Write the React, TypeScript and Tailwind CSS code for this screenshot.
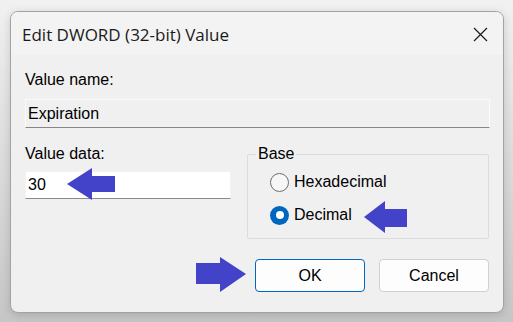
import React from "react";

const ui = { fontFamily: '"Liberation Sans", Arial, sans-serif' };
const title = { fontFamily: '"Open Sans", "Noto Sans", sans-serif' };

function Radio({ checked, label }: { checked?: boolean; label: string }) {
  return (
    <div className="flex items-center h-[20px]">
      {checked ? (
        <span className="w-[19px] h-[19px] rounded-full bg-[#0067c0] flex items-center justify-center">
          <span className="w-[8px] h-[8px] rounded-full bg-white" />
        </span>
      ) : (
        <span className="w-[19px] h-[19px] rounded-full border border-[#6e6e6e] bg-[#f7f7f7]" />
      )}
      <span className="ml-[5px] text-[16px] leading-[20px] text-black">{label}</span>
    </div>
  );
}

export default function App() {
  return (
    <div
      className="relative w-[513px] h-[322px] overflow-hidden bg-linear-to-b from-[#f1f1f1] to-[#c6c6c6] pt-[11px] pl-[10px]"
      style={ui}
    >
      <div className="w-[494px] h-[302px] border border-[#a3a3a3] rounded-[8px] bg-[#f0f0f0] overflow-hidden shadow-[0_2px_8px_rgba(0,0,0,0.15)] flex flex-col">
        {/* title bar */}
        <div className="h-[43px] bg-[#f3f3f3] flex items-center justify-between pl-[11px] pr-[15px] shrink-0">
          <span className="text-[17px] text-[#1a1a1a] pt-[2px]" style={title}>
            Edit DWORD (32-bit) Value
          </span>
          <svg width="15" height="15" viewBox="0 0 15 15" className="mt-[2px]">
            <path d="M1 1L14 14M14 1L1 14" stroke="#1a1a1a" strokeWidth="1.2" />
          </svg>
        </div>

        <div className="flex flex-col pl-[14px] pr-[13px]">
          <div className="mt-[15px] h-[20px] text-[16px] leading-[20px] text-black">Value name:</div>
          <div className="mt-[9px] h-[29px] border border-[#fbfbfb] border-b-[#878787] bg-[#f0f0f0] flex items-center pl-[2px] text-[16px] text-black">
            Expiration
          </div>

          <div className="flex mt-[16px]">
            <div className="w-[206px] flex flex-col">
              <div className="h-[20px] text-[16px] leading-[20px] text-black">Value data:</div>
              <div className="mt-[7px] h-[28px] bg-white border border-[#f2f2f2] border-b-[#8a8a8a] flex items-center pl-[2px] text-[16px] text-black">
                30
              </div>
            </div>
            <fieldset className="ml-[16px] w-[242px] h-[95px] border border-[#dcdcdc] rounded-[2px] pl-[22px]">
              <legend className="ml-[-14px] px-[2px] text-[16px] leading-[20px] text-black">Base</legend>
              <div className="mt-[8px]">
                <Radio label="Hexadecimal" />
              </div>
              <div className="mt-[13px]">
                <Radio checked label="Decimal" />
              </div>
            </fieldset>
          </div>

          <div className="flex justify-end gap-[14px] mt-[20px] pr-[1px]">
            <button className="w-[110px] h-[33px] rounded-[4px] border border-[#0067c0] bg-[#fdfdfd] text-[16px] text-black">
              OK
            </button>
            <button className="w-[110px] h-[33px] rounded-[4px] border border-[#d0d0d0] bg-[#fdfdfd] text-[16px] text-black">
              Cancel
            </button>
          </div>
        </div>
      </div>

      {/* annotation arrows */}
      <svg className="absolute inset-0 pointer-events-none" width="513" height="322">
        <polygon points="67,184 92,168 92,176 115,176 115,192 92,192 92,200" fill="#4343c9" />
        <polygon points="364,217 385,201 385,209 407,209 407,227 385,227 385,233" fill="#4343c9" />
        <polygon points="246,274 220,257 220,263 196,263 196,284 220,284 220,292" fill="#4343c9" />
      </svg>
    </div>
  );
}
